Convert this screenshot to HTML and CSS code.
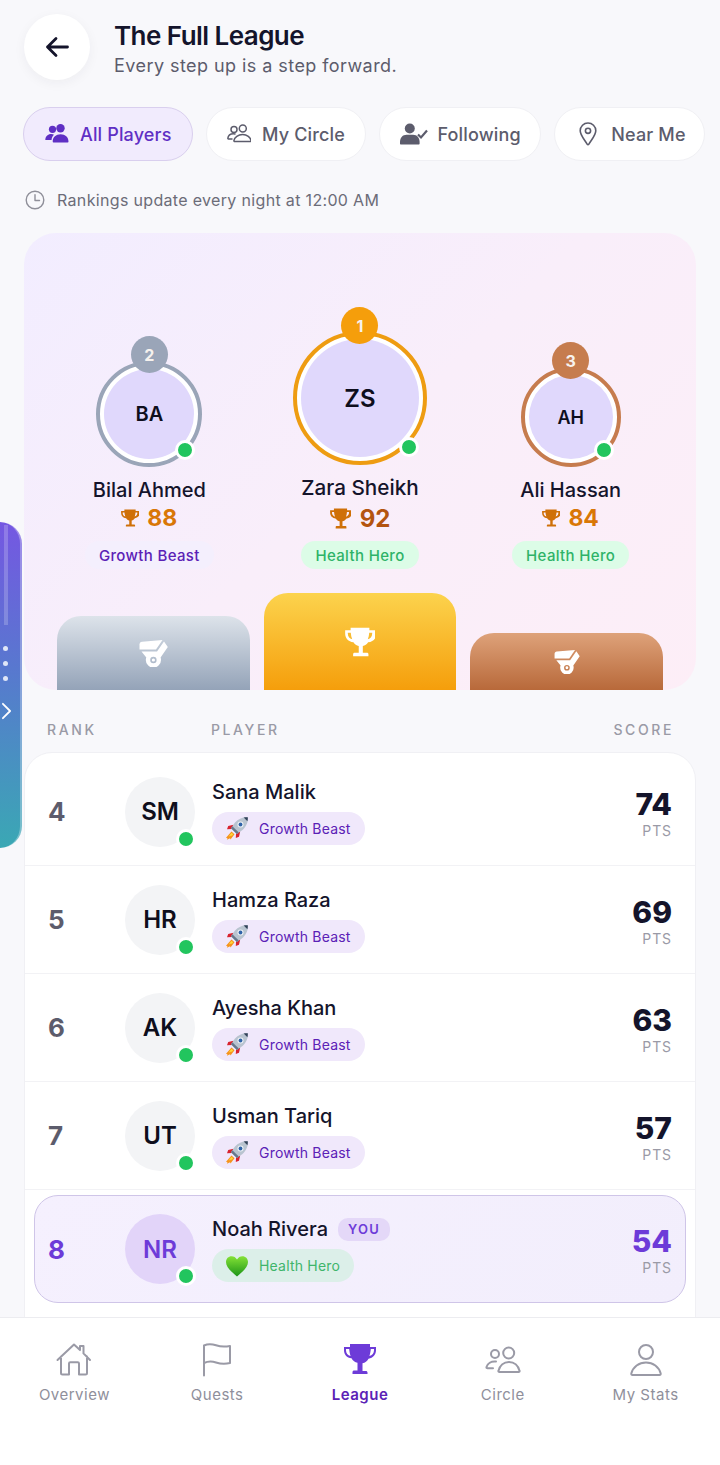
FILE: index.html
```html
<!DOCTYPE html>
<html lang="en">
<head>
  <meta charset="UTF-8">
  <meta name="viewport" content="width=device-width, initial-scale=1.0">
  <title>The Full League</title>
  <link rel="stylesheet" href="styles.css">
</head>
<body>
  <svg class="sprites" width="0" height="0" aria-hidden="true">
    <symbol id="trophy" viewBox="2.400 1.800 19.200 18.600">
      <path fill="currentColor" d="M6 2h12v1.500h4.500v2.200c0 3-2 5.200-5.300 5.600-.9 1.300-2 2.100-3.400 2.400V18h2.700c.5 0 .9.400.9.900v1.300H7.600v-1.300c0-.5.400-.9.900-.9h2.700v-4.300c-1.400-.3-2.500-1.100-3.400-2.400C4.500 10.900 2.500 8.700 2.500 5.700V3.500H6V2zM4.200 5.200v.5c0 1.800 1 3.200 2.800 3.700-.5-1.200-.8-2.600-.9-4.200H4.200zm15.600 0h-1.900c-.1 1.600-.4 3-.9 4.200 1.800-.5 2.800-1.900 2.800-3.700v-.5z" fill-rule="evenodd"/>
    </symbol>
    <symbol id="medal" viewBox="0 0 29 27">
      <path fill="currentColor" d="M3 1.800 23.500 0 17 9.500H.5V4.500C.5 3 1.500 2 3 1.800z"/>
      <path fill="currentColor" fill-rule="evenodd" d="M25 1.500 28.800 7 21.600 17.500c.3.800.4 1.500.4 2.500a7.600 7.600 0 0 1-15.200 0c0-1 .2-1.700.5-2.500L2.500 11.500H18zM14.400 16.800a3.200 3.200 0 1 0 0 6.400 3.200 3.200 0 0 0 0-6.400zm0 1.600a1.600 1.600 0 1 1 0 3.200 1.600 1.600 0 0 1 0-3.200z"/>
    </symbol>
    <symbol id="rocket" viewBox="0 0 24 24">
      <path fill="#f6941c" d="M6.500 15.500 1 21.800l1.500.4-.6 1.600 3.200-1.500.4 1.200 4-5.300z"/>
      <path fill="#ffd93b" d="M6.300 17 3.700 20.500l2.700-1.100.5.600 1.300-2z"/>
      <path fill="#d8232f" d="M8.500 8.800 3.200 10l-1.200 3.200 5.200-.3zM15.200 15.500l-1.200 5.300-3.200 1.200.3-5.200z"/>
      <path fill="#b9c4d0" d="M22.800 1.200c-5-.4-9.500 1.600-12.800 5.200L6 12.200l5.800 5.800 5.700-4c3.700-3.300 5.700-7.800 5.300-12.800z"/>
      <path fill="#66788c" d="M6 12.200l5.800 5.800 2-1.400-6.400-6.400z"/>
      <path fill="#33435a" d="M22.800 1.200c-1.400-.1-2.800 0-4.100.4l3.700 3.700c.4-1.300.5-2.700.4-4.100z"/>
      <circle fill="#eef2f6" cx="15.500" cy="8.500" r="3"/>
      <circle fill="#2f63a8" cx="15.500" cy="8.500" r="1.900"/>
    </symbol>
    <symbol id="heart" viewBox="0 0 24 24">
      <defs>
        <linearGradient id="heartFill" x1="0" y1="0" x2="0" y2="1">
          <stop offset="0" stop-color="#84e236"/>
          <stop offset="1" stop-color="#1c9418"/>
        </linearGradient>
      </defs>
      <path fill="url(#heartFill)" d="M12 22.500C5.500 17 1 13 1 8c0-3.400 2.500-5.800 5.600-5.800 2.200 0 4.200 1.200 5.400 3.400 1.200-2.200 3.200-3.400 5.400-3.400C20.500 2.200 23 4.600 23 8c0 5-4.500 9-11 14.500z"/>
    </symbol>
  </svg>

  <div class="screen">
    <main class="content">
      <header class="top">
        <button class="back" type="button" aria-label="Back">
          <svg width="28" height="28" viewBox="0 0 28 28" fill="none" stroke="currentColor" stroke-width="2.800" stroke-linecap="round" stroke-linejoin="round"><path d="M24.500 14H4.500M13 5.500 4.500 14l8.500 8.500"/></svg>
        </button>
        <div class="heading">
          <h1>The Full League</h1>
          <p class="sub">Every step up is a step forward.</p>
        </div>
      </header>

      <nav class="tabs">
        <a class="tab tab-on">
          <svg width="24" height="20" viewBox="0 0 24 20" fill="currentColor"><circle cx="7.500" cy="5.300" r="3.600"/><circle cx="15.500" cy="4.300" r="4.200"/><path d="M.3 16c0-3.500 2.600-6 5.900-6 1.100 0 2 .2 2.800.7-1.400 1.300-2.300 3.100-2.500 5.300zM7.700 17.500c0-4.200 3.300-7.200 7.900-7.200s7.900 3 7.900 7.200c0 .6-.3.900-.8.900H8.500c-.5 0-.8-.3-.8-.9z"/></svg>
          All Players
        </a>
        <a class="tab">
          <svg width="24" height="20" viewBox="0 0 24 20" fill="none" stroke="currentColor" stroke-width="1.500" stroke-linecap="round" stroke-linejoin="round"><circle cx="7" cy="5.500" r="3"/><circle cx="15.800" cy="4.500" r="3.500"/><path d="M8 11c-.5-.2-1-.2-1.600-.2-3 0-5.200 1.800-5.600 4.500 0 .4.200.7.600.7H5M7.700 18.500c-.5 0-.9-.4-.8-.9.500-3.300 4.300-6 8.700-6s8 2.700 8.400 6c.1.500-.3.900-.8.900z" transform="translate(0 -1)"/></svg>
          My Circle
        </a>
        <a class="tab tab-follow">
          <svg width="28" height="22" viewBox="0 0 28 22" fill="currentColor"><circle cx="9.800" cy="5.500" r="5"/><path d="M0 19c0-4.500 2.800-7.300 6.500-7.300h6.600c3.700 0 6.500 2.800 6.500 7.300v1.500c0 .6-.4 1-1 1H1c-.6 0-1-.4-1-1z"/><path d="M18 11.500l3 3 6-7" fill="none" stroke="currentColor" stroke-width="2.200"/></svg>
          Following
        </a>
        <a class="tab tab-near">
          <svg width="18" height="24" viewBox="0 0 18 24" fill="none" stroke="currentColor" stroke-width="1.600" stroke-linejoin="round"><path d="M9 22.800c-.3 0-.5-.1-.7-.4C5 17 1.200 13 1.200 8.800 1.200 4.400 4.700 1 9 1s7.800 3.400 7.800 7.800c0 4.200-3.800 8.200-7.100 13.600-.2.300-.4.400-.7.400z"/><circle cx="9" cy="8.800" r="2.600"/></svg>
          Near Me
        </a>
      </nav>

      <p class="note">
        <svg width="20" height="20" viewBox="0 0 20 20" fill="none" stroke="currentColor" stroke-width="1.400" stroke-linecap="round" stroke-linejoin="round"><circle cx="10" cy="10" r="8.800"/><path d="M10 4.800V10.500h4.500"/></svg>
        Rankings update every night at 12:00 AM
      </p>

      <section class="podium">
        <div class="winners">
          <div class="winner">
            <div class="ring ring-silver">
              <span class="place place-silver">2</span>
              <span class="face">BA</span>
              <span class="dot"></span>
            </div>
            <div class="winner-name">Bilal Ahmed</div>
            <div class="winner-score"><svg width="18" height="18"><use href="#trophy"/></svg>88</div>
            <span class="chip chip-purple">Growth Beast</span>
          </div>
          <div class="winner winner-top">
            <div class="ring ring-gold">
              <span class="place place-gold">1</span>
              <span class="face">ZS</span>
              <span class="dot"></span>
            </div>
            <div class="winner-name">Zara Sheikh</div>
            <div class="winner-score"><svg width="21" height="21"><use href="#trophy"/></svg>92</div>
            <span class="chip chip-green">Health Hero</span>
          </div>
          <div class="winner winner-third">
            <div class="ring ring-bronze">
              <span class="place place-bronze">3</span>
              <span class="face">AH</span>
              <span class="dot"></span>
            </div>
            <div class="winner-name">Ali Hassan</div>
            <div class="winner-score"><svg width="18" height="18"><use href="#trophy"/></svg>84</div>
            <span class="chip chip-green">Health Hero</span>
          </div>
        </div>
        <div class="steps">
          <div class="step step-silver"><svg width="29" height="27"><use href="#medal"/></svg></div>
          <div class="step step-gold"><svg width="30" height="30"><use href="#trophy"/></svg></div>
          <div class="step step-bronze"><svg width="26" height="24"><use href="#medal"/></svg></div>
        </div>
      </section>

      <div class="columns">
        <span class="col-rank">RANK</span>
        <span class="col-player">PLAYER</span>
        <span class="col-score">SCORE</span>
      </div>

      <section class="table">
        <div class="row">
          <span class="rank">4</span>
          <div class="avatar">SM<span class="dot"></span></div>
          <div class="who">
            <div class="name">Sana Malik</div>
            <span class="tag tag-purple"><svg width="24" height="24"><use href="#rocket"/></svg>Growth Beast</span>
          </div>
          <div class="pts"><b>74</b><span>PTS</span></div>
        </div>
        <div class="row">
          <span class="rank">5</span>
          <div class="avatar">HR<span class="dot"></span></div>
          <div class="who">
            <div class="name">Hamza Raza</div>
            <span class="tag tag-purple"><svg width="24" height="24"><use href="#rocket"/></svg>Growth Beast</span>
          </div>
          <div class="pts"><b>69</b><span>PTS</span></div>
        </div>
        <div class="row">
          <span class="rank">6</span>
          <div class="avatar">AK<span class="dot"></span></div>
          <div class="who">
            <div class="name">Ayesha Khan</div>
            <span class="tag tag-purple"><svg width="24" height="24"><use href="#rocket"/></svg>Growth Beast</span>
          </div>
          <div class="pts"><b>63</b><span>PTS</span></div>
        </div>
        <div class="row">
          <span class="rank">7</span>
          <div class="avatar">UT<span class="dot"></span></div>
          <div class="who">
            <div class="name">Usman Tariq</div>
            <span class="tag tag-purple"><svg width="24" height="24"><use href="#rocket"/></svg>Growth Beast</span>
          </div>
          <div class="pts"><b>57</b><span>PTS</span></div>
        </div>
        <div class="row row-me">
          <span class="rank">8</span>
          <div class="avatar">NR<span class="dot"></span></div>
          <div class="who">
            <div class="name">Noah Rivera <span class="you">YOU</span></div>
            <span class="tag tag-green"><svg width="24" height="24"><use href="#heart"/></svg>Health Hero</span>
          </div>
          <div class="pts"><b>54</b><span>PTS</span></div>
        </div>
      </section>
    </main>

    <nav class="bottom">
      <a class="nav-item">
        <svg width="36" height="34" viewBox="0 0 36 34" fill="none" stroke="currentColor" stroke-width="2" stroke-linecap="round" stroke-linejoin="round"><path d="M1.500 17 18 1.500l6 5.600V3h3.500v7.400L34 17M5 13.500V30c0 1 .6 1.500 1.500 1.500h6.500V20.500c0-.8.500-1.300 1.300-1.300h7.400c.8 0 1.300.5 1.300 1.300V31.500h6.500c.9 0 1.500-.5 1.500-1.500V13.500"/></svg>
        Overview
      </a>
      <a class="nav-item">
        <svg width="30" height="34" viewBox="0 0 30 34" fill="none" stroke="currentColor" stroke-width="2" stroke-linecap="round" stroke-linejoin="round"><path d="M2 32.500V2.500c4-1.800 8-1.500 12-.2s8 1.800 14 .6V20c-6 1.500-10 .8-14-.5s-8-1.300-12 .5"/></svg>
        Quests
      </a>
      <a class="nav-item nav-on">
        <svg width="34" height="34" viewBox="0 0 34 34" fill="currentColor"><path d="M7 1h20v3h6v3.200c0 4.300-2.800 7.600-7.500 8.500-1.400 2.400-3.400 4-6 4.500v7.800h3.300c1 0 1.700.7 1.700 1.500v1.500H9.500V29c0-.8.700-1.500 1.700-1.500H14.500v-7.800c-2.600-.5-4.600-2.100-6-4.500C3.800 14.800 1 11.500 1 7.200V4h6zM3 6v1.200c0 2.800 1.700 5 4.600 5.800C6.900 11.200 6.400 8.800 6.200 6zm28 0h-3.200c-.2 2.800-.7 5.200-1.400 7 2.900-.8 4.600-3 4.600-5.800z" fill-rule="evenodd"/></svg>
        League
      </a>
      <a class="nav-item">
        <svg width="36" height="34" viewBox="0 0 36 34" fill="none" stroke="currentColor" stroke-width="2" stroke-linecap="round" stroke-linejoin="round"><circle cx="10" cy="11" r="4"/><circle cx="23.700" cy="10" r="5.500"/><path d="M11 18.500c-5-.5-8.500 2-9.500 5.500-.2.800.2 1.200 1 1.200h5.500M14.500 29c-.9 0-1.300-.5-1-1.300 1.200-4.700 5-8.700 10.500-8.700s9.300 4 10.500 8.700c.3.800-.1 1.300-1 1.300z"/></svg>
        Circle
      </a>
      <a class="nav-item">
        <svg width="32" height="34" viewBox="0 0 32 34" fill="none" stroke="currentColor" stroke-width="2" stroke-linecap="round" stroke-linejoin="round"><circle cx="16" cy="9" r="7"/><path d="M2.500 32c-.9 0-1.400-.6-1.200-1.400C3 24 9 19.500 16 19.500s13 4.500 14.700 11.100c.2.800-.3 1.400-1.200 1.400z"/></svg>
        My Stats
      </a>
    </nav>

    <aside class="handle">
      <span class="handle-bar"></span>
      <span class="handle-dots"><i></i><i></i><i></i></span>
      <svg width="11" height="18" viewBox="0 0 12 20" fill="none" stroke="currentColor" stroke-width="2" stroke-linecap="round" stroke-linejoin="round"><path d="M2 2l8 8-8 8"/></svg>
    </aside>
  </div>
</body>
</html>
```

FILE: styles.css
```css
* {
  box-sizing: border-box;
}
html, body {
  margin: 0;
  padding: 0;
}
body {
  font-family: Inter, "Noto Sans", sans-serif;
  color: #14142b;
  background: #f8f8fb;
}
.sprites {
  position: absolute;
}
.screen {
  position: relative;
  width: 720px;
  height: 1465px;
  display: flex;
  flex-direction: column;
  overflow: hidden;
}
.content {
  flex: 1;
  min-height: 0;
  overflow: hidden;
  padding: 14px 24px 0;
}

/* header */
.top {
  display: flex;
  align-items: center;
  gap: 24px;
}
.back {
  width: 66px;
  height: 66px;
  border: none;
  border-radius: 50%;
  background: #fff;
  color: #14142b;
  box-shadow: 0 3px 12px rgba(30, 30, 60, 0.05);
  display: flex;
  align-items: center;
  justify-content: center;
  padding: 0;
}
.heading {
  padding-top: 3px;
}
h1 {
  margin: 0;
  font-size: 26px;
  line-height: 34px;
  font-weight: 600;
  letter-spacing: -0.55px;
}
.sub {
  margin: 1px 0 0;
  font-size: 18px;
  line-height: 24px;
  color: #5c5c6c;
  letter-spacing: 0.44px;
}

/* filter tabs */
.tabs {
  display: flex;
  gap: 13.5px;
  margin: 27px -24px 0 -1px;
}
.tab {
  height: 54px;
  padding: 0 20px;
  display: flex;
  align-items: center;
  gap: 11px;
  border-radius: 27px;
  background: #fff;
  border: 1px solid #f0f0f4;
  font-size: 18px;
  font-weight: 500;
  letter-spacing: 0.15px;
  color: #5c5c6c;
  white-space: nowrap;
}
.tab-on {
  padding: 0 20px 0 21px;
  background: #f1ebfd;
  border-color: #d9cfee;
  color: #5f2fc4;
}
.tab-follow {
  padding: 0 19px 0 20px;
  gap: 9px;
}
.tab-near {
  padding: 0 18px 0 24px;
  gap: 14px;
}
.note {
  display: flex;
  align-items: center;
  gap: 12px;
  margin: 27px 0 0 1px;
  font-size: 16px;
  line-height: 24px;
  letter-spacing: 0.33px;
  color: #6c6c78;
}
.note svg {
  color: #8f8f99;
}

/* podium */
.podium {
  margin-top: 21px;
  height: 457px;
  border-radius: 32px;
  background: linear-gradient(135deg, #f2edff 0%, #f9eefa 50%, #fdeef7 100%);
  padding-top: 98px;
  overflow: hidden;
}
.winners {
  display: grid;
  grid-template-columns: repeat(3, 1fr);
  align-items: end;
  padding: 0 20px;
}
.winner {
  display: flex;
  flex-direction: column;
  align-items: center;
}
.ring {
  position: relative;
  width: 106px;
  height: 106px;
  padding: 4px;
  border-radius: 50%;
  border: 4px solid #9aa5b8;
  background: #fff;
}
.ring-gold {
  width: 134px;
  height: 134px;
  border-color: #ee9c12;
}
.ring-bronze {
  width: 100px;
  height: 100px;
  border-color: #c67c4e;
}
.face {
  width: 100%;
  height: 100%;
  border-radius: 50%;
  background: #e0d8fc;
  display: flex;
  align-items: center;
  justify-content: center;
  font-size: 20px;
  font-weight: 600;
  color: #0e0e1c;
}
.ring-gold .face {
  font-size: 24px;
}
.ring-bronze .face {
  font-size: 18px;
}
.place {
  position: absolute;
  top: -29px;
  left: 50%;
  margin-left: -18.5px;
  width: 37px;
  height: 37px;
  border-radius: 50%;
  display: flex;
  align-items: center;
  justify-content: center;
  font-size: 16px;
  font-weight: 700;
  color: #f6f2ee;
}
.place-silver {
  background: #9aa5b8;
}
.place-gold {
  top: -28px;
  background: #f59e0b;
}
.place-bronze {
  background: #c67c4e;
}
.dot {
  position: absolute;
  width: 20px;
  height: 20px;
  border-radius: 50%;
  background: #22c55e;
  border: 3px solid #fff;
}
.ring .dot {
  right: 3px;
  bottom: 3px;
}
.ring-gold .dot {
  right: 4px;
  bottom: 4px;
}
.winner-name {
  margin-top: 11px;
  font-size: 20px;
  line-height: 24px;
  font-weight: 500;
}
.winner-score {
  margin-top: 1px;
  display: flex;
  align-items: center;
  gap: 8px;
  height: 30px;
  font-size: 23px;
  font-weight: 700;
  color: #d97706;
}
.winner-score svg {
  color: #cf7008;
}
.winner-top .winner-name {
  font-size: 20.7px;
}
.winner-top .winner-score {
  margin-top: 3px;
  gap: 9px;
  font-size: 24px;
  color: #b4540f;
}
.chip {
  margin-top: 8px;
  height: 28px;
  padding: 0 14px;
  border-radius: 14px;
  display: flex;
  align-items: center;
  font-size: 15px;
  font-weight: 500;
  letter-spacing: 0.35px;
}
.chip-purple {
  background: #f4effd;
  color: #5b21b6;
}
.chip-green {
  background: #dcfce7;
  color: #2eb368;
}
.steps {
  display: grid;
  grid-template-columns: repeat(3, 1fr);
  gap: 14px;
  align-items: end;
  height: 97px;
  margin-top: 24px;
  padding: 0 33px;
}
.step {
  border-radius: 24px 24px 0 0;
  color: #fff;
  display: flex;
  align-items: center;
  justify-content: center;
}
.step-silver {
  height: 74px;
  background: linear-gradient(180deg, #dde3ea, #94a3b8);
}
.step-gold {
  height: 97px;
  background: linear-gradient(180deg, #fcd34d, #f59e0b);
}
.step-bronze {
  height: 57px;
  background: linear-gradient(180deg, #dea27a, #b8693a);
}

/* table */
.columns {
  display: flex;
  height: 62px;
  padding: 31px 22px 0 23px;
  line-height: 17px;
  font-size: 14px;
  font-weight: 500;
  letter-spacing: 2.6px;
  color: #9a9aa6;
}
.col-rank {
  width: 164px;
}
.col-player {
  flex: 1;
}
.table {
  background: #fff;
  border: 1px solid #f0f0f4;
  border-radius: 28px 28px 0 0;
  padding: 5px 0 40px;
}
.row {
  display: flex;
  align-items: center;
  height: 108px;
  border-bottom: 1px solid #f2f2f5;
  padding: 0 23px;
}
.rank {
  width: 77px;
  font-size: 26px;
  font-weight: 700;
  color: #5c5c6c;
}
.avatar {
  position: relative;
  width: 70px;
  height: 70px;
  border-radius: 50%;
  background: #f3f4f6;
  display: flex;
  align-items: center;
  justify-content: center;
  font-size: 24px;
  font-weight: 600;
  color: #0e0e1c;
}
.avatar .dot {
  right: -1px;
  bottom: -2px;
}
.who {
  flex: 1;
  margin-left: 17px;
}
.name {
  display: flex;
  align-items: center;
  gap: 10px;
  font-size: 20px;
  line-height: 26px;
  font-weight: 500;
  margin-bottom: 7px;
}
.tag {
  display: inline-flex;
  align-items: center;
  gap: 10px;
  height: 33px;
  padding: 0 14px 0 13px;
  border-radius: 17px;
  font-size: 14px;
  letter-spacing: 0.2px;
}
.tag-purple {
  background: #f0e8fb;
  color: #5b21b6;
}
.tag-green {
  background: #dcefe9;
  color: #3fb56b;
}
.pts {
  display: flex;
  flex-direction: column;
  align-items: flex-end;
  padding-top: 2px;
}
.pts b {
  font-size: 30px;
  line-height: 36px;
  font-weight: 800;
}
.pts span {
  font-size: 14px;
  line-height: 18px;
  letter-spacing: 0.9px;
  color: #9a9aa6;
}
.row-me {
  margin: 5px 9px 0;
  padding: 0 13px;
  border: 1px solid #cfc5e8;
  border-radius: 24px;
  background: linear-gradient(135deg, #f5f0fe, #f2eefc);
}
.row-me .rank,
.row-me .pts b {
  color: #6d3bd8;
}
.row-me .avatar {
  background: #e2d4f9;
  color: #6d3bd8;
}
.you {
  height: 23px;
  padding: 0 10px;
  border-radius: 10px;
  background: #e4d8f8;
  color: #6d3bd8;
  font-size: 13px;
  font-weight: 600;
  letter-spacing: 1.2px;
  display: flex;
  align-items: center;
}

/* bottom nav */
.bottom {
  flex: none;
  height: 148px;
  background: #fff;
  border-top: 1px solid #ececf0;
  display: grid;
  grid-template-columns: repeat(5, 1fr);
  padding: 25px 3px 0;
  align-items: start;
}
.nav-item {
  display: flex;
  flex-direction: column;
  align-items: center;
  gap: 8px;
  font-size: 15px;
  line-height: 20px;
  letter-spacing: 0.5px;
  color: #8f8f9b;
}
.nav-item svg {
  color: #9a9aa6;
}
.nav-on {
  color: #5b21b6;
  font-weight: 600;
}
.nav-on svg {
  color: #6d3bd8;
}

/* side drawer handle */
.handle {
  position: absolute;
  left: 0;
  top: 522px;
  width: 22px;
  height: 326px;
  border-radius: 0 24px 24px 0;
  border-right: 2px solid rgba(255, 255, 255, 0.3);
  background: linear-gradient(180deg, #7557e2 0%, #5878cf 45%, #3aa8b4 100%);
  color: #fff;
}
.handle-bar {
  position: absolute;
  left: 4px;
  top: 3px;
  width: 4px;
  height: 100px;
  background: rgba(255, 255, 255, 0.2);
}
.handle-dots {
  position: absolute;
  left: 3px;
  top: 124px;
  display: flex;
  flex-direction: column;
  gap: 10px;
}
.handle-dots i {
  width: 5px;
  height: 5px;
  border-radius: 50%;
  background: #dfe6f7;
}
.handle svg {
  position: absolute;
  left: 1px;
  top: 180px;
}
```
